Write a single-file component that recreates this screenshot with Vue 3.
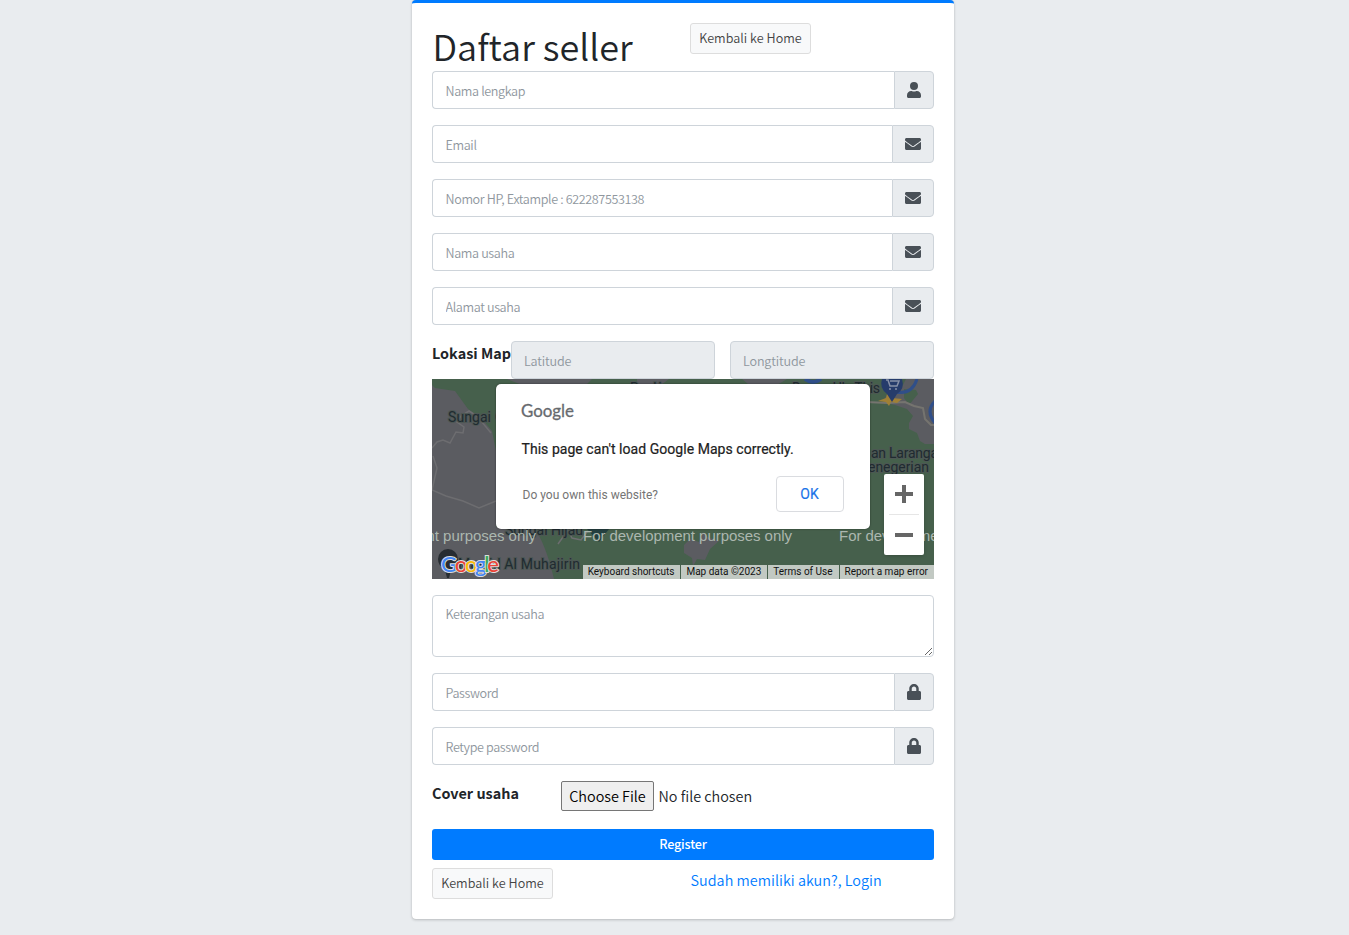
<script setup>
const icons = {
  user: { box: '0 0 448 512', w: 14, d: 'M224 256a128 128 0 1 0 0-256 128 128 0 0 0 0 256zm90 32h-17a174 174 0 0 1-146 0h-17C60 288 0 348 0 422v42c0 27 21 48 48 48h352c27 0 48-21 48-48v-42c0-74-60-134-134-134z' },
  mail: { box: '0 0 512 512', w: 16, d: 'M502 191c4-3 10 0 10 5v204c0 26-22 48-48 48H48c-26 0-48-22-48-48V196c0-5 6-8 10-5 22 17 52 40 154 114 21 15 57 48 92 48 35 0 72-33 92-48 102-74 132-97 154-114zM256 320c23 0 57-29 73-41 133-96 143-105 174-129 6-4 9-11 9-19v-19c0-26-22-48-48-48H48c-26 0-48 22-48 48v19c0 8 3 14 9 19 31 24 41 33 174 129 16 12 50 41 73 41z' },
  lock: { box: '0 0 448 512', w: 14, d: 'M400 224h-24v-72C376 68 308 0 224 0S72 68 72 152v72H48c-27 0-48 21-48 48v192c0 27 21 48 48 48h352c27 0 48-21 48-48V272c0-27-21-48-48-48zm-104 0H152v-72c0-40 32-72 72-72s72 32 72 72v72z' },
}
const profile = [
  { name: 'name', hint: 'Nama lengkap', icon: icons.user, type: 'text' },
  { name: 'email', hint: 'Email', icon: icons.mail, type: 'email' },
  { name: 'phone', hint: 'Nomor HP, Extample : 622287553138', icon: icons.mail, type: 'text' },
  { name: 'business', hint: 'Nama usaha', icon: icons.mail, type: 'text' },
  { name: 'address', hint: 'Alamat usaha', icon: icons.mail, type: 'text' },
]
const secrets = [
  { name: 'password', hint: 'Password', icon: icons.lock },
  { name: 'retype', hint: 'Retype password', icon: icons.lock },
]
</script>

<template>
  <main class="page">
    <form class="card" @submit.prevent>
      <header class="head">
        <h1>Daftar seller</h1>
        <a class="btn">Kembali ke Home</a>
      </header>

      <div v-for="f in profile" :key="f.name" class="group">
        <input :type="f.type" :name="f.name" :placeholder="f.hint" />
        <span class="addon"><svg :viewBox="f.icon.box" :width="f.icon.w" height="16"><path :d="f.icon.d" /></svg></span>
      </div>

      <div class="location">
        <label>Lokasi Map</label>
        <input placeholder="Latitude" readonly />
        <input placeholder="Longtitude" readonly />
      </div>

      <div class="map">
        <svg class="tiles" width="502" height="200" viewBox="0 0 502 200">
          <rect width="502" height="200" fill="#46604c" />
          <path fill="#5b5c61" d="M0 6l3 3 20 3 13 18 14 10 10 12 4 20v76l38 0q12 18 20 52H0z" />
          <path fill="#5b5c61" d="M75 0h85l-6 6H90zM205 0h32l-8 6h-24zM310 0h45l-10 6h-28z" />
          <path fill="#5b5c61" d="M474 0h28v65h-9l-5-3-3-8-8-4v-6l4-7-6-7-12-4-12-3 5-9 14-6z" />
          <path fill="#46604c" d="M472 10l12 1 2 4-9 11-5-7z" />
          <path fill="#5b5c61" d="M252 166l6-6 9 3 4-10 4 5 12 4-9 8-5 11-8-1-4 7-1-8-8-5z" />
          <g fill="none" stroke="#6d6d70" stroke-width="1.5">
            <path d="M0 69l5-6 6-2 7 3 6-11 7 1 1-6-7-5 4-6 8-5 8 5 14 17M1 77l4 12-5 22 14 6 17 5 16 7 17-7M126 165l10-14 4 8 9 2 6-8" />
            <path d="M434 23l22 1 17-1 9 4 9 2 2 11 6 6 3 0" stroke="#75746f" stroke-width="2" />
          </g>
          <g fill="none" stroke="#304f89">
            <path d="M373 0q8 6 16 0" stroke-width="4" />
            <path d="M485 0q-5 16-21 13M503 22q-10 10 0 22" stroke-width="3" />
          </g>
          <path fill="#a08036" d="M446 22l8-3 1-4 5 4 10 1-5 4-6-1-2 4-3-4z" />
          <path fill="#263c6b" d="M450 0h20q3 10-5 15l-5 8-5-8q-8-6-5-15z" />
          <g fill="none" stroke="#8791a8" stroke-width="1.500"><path d="M454 1h2l2 6h7l2-5h-9" /></g>
          <circle cx="458" cy="10" r="1" fill="#8791a8" /><circle cx="464" cy="10" r="1" fill="#8791a8" />
          <path fill="#272c31" d="M6 180a10 10 0 1 1 20 0q0 7-7 11l-2 8h-2l-2-8q-7-4-7-11z" />
          <path fill="#243f40" d="M155 150h22l-10 13z" />
          <g class="place">
            <text x="16" y="43" textLength="43">Sungai</text><text x="63" y="43">G</text>
            <text x="198" y="14" textLength="54">Bangkinang</text>
            <text x="360" y="14" textLength="88">Danau Ulu This</text>
            <text x="439" y="79" textLength="67">an Laranga</text>
            <text x="436" y="93" textLength="61">enegerian</text>
            <text x="73" y="156" textLength="78">Sungai Hijau</text>
            <text x="26" y="190" textLength="122">Masjid Al Muhajirin</text>
          </g>
          <g class="watermark">
            <text x="-105" y="162" textLength="209">For development purposes only</text>
            <text x="151" y="162" textLength="209">For development purposes only</text>
            <text x="407" y="162" textLength="209">For development purposes only</text>
          </g>
          <g class="brand">
            <text x="9" y="193" textLength="58"><tspan fill="#4285f4">G</tspan><tspan fill="#ea4335">o</tspan><tspan fill="#fbbc05">o</tspan><tspan fill="#4285f4">g</tspan><tspan fill="#34a853">l</tspan><tspan fill="#ea4335">e</tspan></text>
          </g>
        </svg>
        <div class="zoom"><button type="button" class="plus" aria-label="Zoom in"></button><button type="button" aria-label="Zoom out"></button></div>
        <div class="credits"><span>Keyboard shortcuts</span><span>Map data ©2023</span><span>Terms of Use</span><span>Report a map error</span></div>
        <section class="dialog">
          <svg class="mark" width="54" height="22" viewBox="0 0 54 22"><text x="0" y="18" textLength="53" lengthAdjust="spacingAndGlyphs">Google</text></svg>
          <p>This page can't load Google Maps correctly.</p>
          <div class="actions"><a>Do you own this website?</a><button type="button">OK</button></div>
        </section>
      </div>

      <textarea placeholder="Keterangan usaha"></textarea>

      <div v-for="f in secrets" :key="f.name" class="group">
        <input type="password" :name="f.name" :placeholder="f.hint" />
        <span class="addon"><svg :viewBox="f.icon.box" :width="f.icon.w" height="16"><path :d="f.icon.d" /></svg></span>
      </div>

      <div class="cover">
        <label>Cover usaha</label>
        <button type="button" class="file">Choose File</button>
        <span>No file chosen</span>
      </div>

      <button type="submit" class="register">Register</button>
      <footer class="foot">
        <a class="btn">Kembali ke Home</a>
        <a class="login">Sudah memiliki akun?, Login</a>
      </footer>
    </form>
  </main>
</template>

<style>
body { background: #e9ecef; overflow: hidden; }
</style>

<style scoped>
* { box-sizing: border-box; }
.page {
  height: 935px;
  padding-left: 412px;
  background: #e9ecef;
  color: #212529;
  font: 350 14.4px/24px "Noto Sans CJK SC", "Noto Sans", sans-serif;
}
.card {
  width: 542px;
  height: 919px;
  padding: 20px;
  background: #fff;
  border-top: 3px solid #007bff;
  border-radius: 4px;
  box-shadow: 0 0 1px rgba(0, 0, 0, .125), 0 1px 3px rgba(0, 0, 0, .2);
}
button, input, textarea { font: inherit; margin: 0; }
.head { display: flex; align-items: flex-start; height: 48px; }
h1 { width: 258px; margin: 0; padding-left: .5px; font-size: 36px; line-height: 44px; font-weight: 350; white-space: nowrap; }
.btn {
  width: 121px;
  height: 31px;
  border: 1px solid #ddd;
  border-radius: 3px;
  background: #f8f9fa;
  color: #444;
  font-size: 12.6px;
  letter-spacing: .03px;
  line-height: 28px;
  text-align: center;
  white-space: nowrap;
}
.group { display: flex; height: 38px; margin-bottom: 16px; }
input, textarea {
  flex: 1;
  min-width: 0;
  border: 1px solid #ced4da;
  border-radius: 4px;
  padding: 1px 12px 0 12.5px;
  background: #fff;
  font-size: 12.6px;
  letter-spacing: -.37px;
  outline: 0;
}
.group input { border-right: 0; border-radius: 4px 0 0 4px; }
input::placeholder, textarea::placeholder { color: #8f979e; opacity: 1; }
.addon {
  display: flex;
  align-items: center;
  padding: 0 12px;
  border: 1px solid #ced4da;
  border-radius: 0 4px 4px 0;
  background: #e9ecef;
}
.addon svg { fill: #495057; }
label { font-weight: 700; white-space: nowrap; }
.location { display: flex; height: 38px; }
.location label { width: 79px; }
.location input { flex: none; width: 204px; padding-left: 12px; background: #e9ecef; letter-spacing: -.15px; }
.location input + input { margin-left: 15px; }
.map { position: relative; height: 200px; margin-bottom: 16px; overflow: hidden; font-family: Roboto, sans-serif; font-weight: 400; }
.tiles { display: block; }
.place { font: 14px Roboto, sans-serif; fill: #202b30; stroke: #4d5754; stroke-width: 2px; paint-order: stroke; }
.watermark { font: 15px "Liberation Sans", sans-serif; fill: #acb7af; }
.brand { font: 500 22px Lato, sans-serif; stroke: #ddd; stroke-width: 2px; paint-order: stroke; }
.zoom {
  position: absolute;
  left: 452px;
  top: 95px;
  width: 40px;
  height: 81px;
  background: #fff;
  border-radius: 2px;
  box-shadow: 0 1px 4px -1px rgba(0, 0, 0, .3);
}
.zoom button { position: relative; display: block; width: 40px; height: 40px; padding: 0; border: 0; background: none; }
.zoom button::before, .plus::after { content: ""; position: absolute; left: 11px; top: 18px; width: 18px; height: 4px; background: #666; }
.zoom .plus { height: 41px; background: linear-gradient(#e6e6e6, #e6e6e6) 5px 40px / 30px 1px no-repeat; }
.zoom .plus::before { top: 18px; }
.zoom .plus::after { left: 18px; top: 11px; width: 4px; height: 18px; }
.credits { position: absolute; right: 0; bottom: 0; display: flex; gap: 1px; font-size: 10px; line-height: 14px; color: #111; white-space: nowrap; }
.credits span { height: 14px; padding: 0 6px 0 5px; background: #c2c9c3; }
.dialog {
  position: absolute;
  left: 64px;
  top: 5px;
  width: 374px;
  height: 145px;
  padding: 15px 26.5px 0 25px;
  border-radius: 5px;
  background: #fff;
  box-shadow: 0 0 2px rgba(0, 0, 0, .5);
}
.mark { display: block; font: 18px Lato, sans-serif; fill: #666a6e; stroke: #666a6e; stroke-width: .3px; overflow: visible; }
.dialog p { margin: 16px 0 15px .5px; font-size: 14px; font-weight: 400; letter-spacing: .045px; line-height: 24px; color: #212121; white-space: nowrap; -webkit-text-stroke: .2px #212121; }
.actions { display: flex; justify-content: space-between; align-items: center; font-size: 12px; color: #757575; padding-left: 1.5px; }
.actions a { padding-top: 1px; letter-spacing: .02px; }
.actions button { width: 68px; height: 36px; border: 1px solid #dadce0; border-radius: 4px; background: #fff; color: #1a73e8; font-size: 14px; font-weight: 400; -webkit-text-stroke: .15px #1a73e8; }
textarea { display: block; width: 100%; height: 62px; margin-bottom: 16px; padding: 6px 12px 6px 12.5px; line-height: 24px; resize: vertical; }
.cover { display: flex; height: 48px; align-items: flex-start; white-space: nowrap; }
.cover label { width: 129px; }
.file { width: 93px; height: 30px; padding: 0; margin-right: 4.5px; border: 1px solid #767676; border-radius: 2px; background: #efefef; color: #000; }
.cover span { line-height: 30px; }
.register { display: block; width: 100%; height: 31px; border: 0; border-radius: 3px; background: #007bff; color: #fff; font-size: 12.6px; font-weight: 500; letter-spacing: -.15px; line-height: 29px; padding: 0 0 2px; }
.foot { display: flex; padding-top: 8px; }
.login { margin-left: 137.5px; color: #007bff; letter-spacing: .03px; white-space: nowrap; }
</style>
